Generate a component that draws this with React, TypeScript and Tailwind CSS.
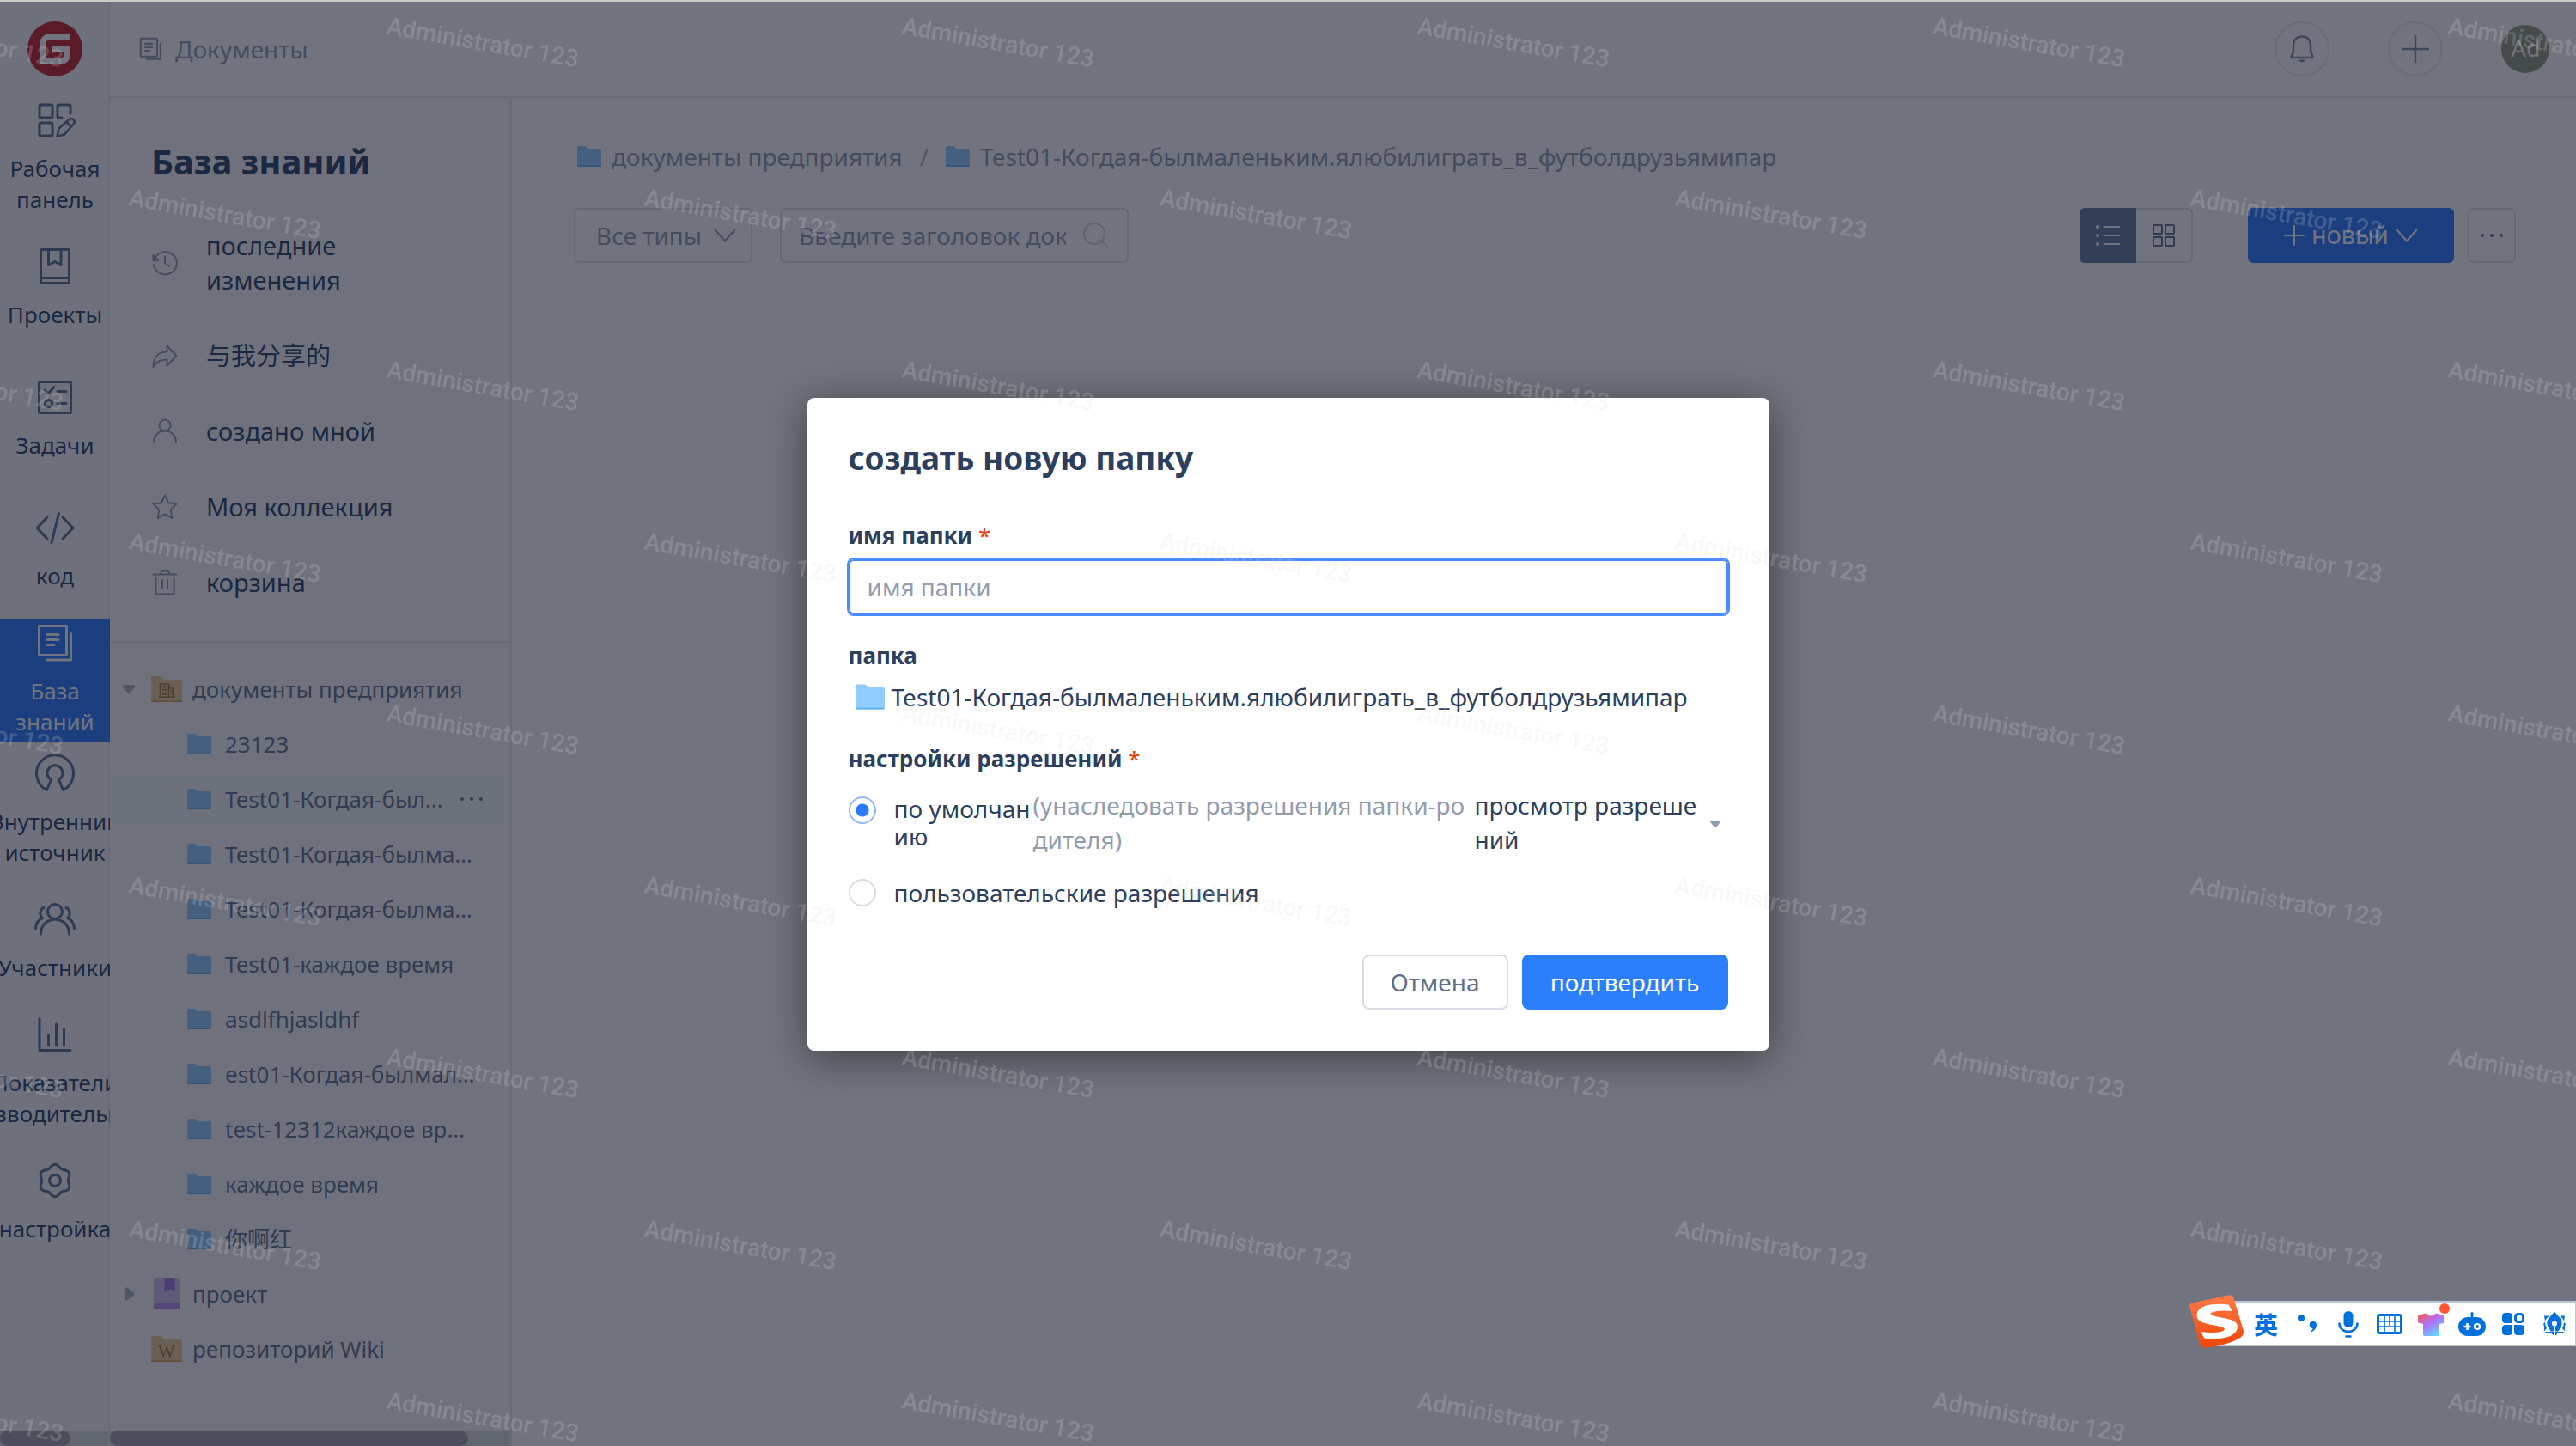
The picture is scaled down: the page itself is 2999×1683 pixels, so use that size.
import React from "react";

type IconProps = { className?: string };

/* ---------- rail icons ---------- */

const Stroke = ({ children, className = "size-12", box = 48, width = 3 }: { children: React.ReactNode; className?: string; box?: number; width?: number }) => (
  <svg viewBox={`0 0 ${box} ${box}`} className={className} fill="none" stroke="currentColor" strokeWidth={width} strokeLinecap="round" strokeLinejoin="round" aria-hidden="true">
    {children}
  </svg>
);

const DashboardIcon = () => (
  <Stroke>
    <rect x="6" y="6" width="15" height="15" rx="1.5" />
    <rect x="6" y="27" width="15" height="15" rx="1.5" />
    <path d="M42 16V7.500A1.500 1.500 0 0 0 40.500 6H28.500A1.500 1.500 0 0 0 27 7.500V19.500A1.500 1.500 0 0 0 28.500 21H32" />
    <path d="M26.500 42.500l2-9L40.500 23a3.700 3.700 0 0 1 5.200 5.200L35 40.500zM37.500 26l5.500 5.500" strokeWidth="2.500" />
  </Stroke>
);

const BookIcon = () => (
  <Stroke>
    <rect x="7.500" y="4.500" width="33" height="39" rx="1.500" />
    <path d="M7.500 37.500h33M16.500 4.500V22.500l7.500-4 7 4V4.500" />
  </Stroke>
);

const TaskIcon = () => (
  <Stroke>
    <rect x="5.500" y="6.500" width="37" height="36" rx="1" />
    <path d="M12 16l4 4 7-7.500M27 17.500h10M27 31.500h10" />
    <circle cx="16.500" cy="31.500" r="4" />
  </Stroke>
);

const CodeIcon = () => (
  <Stroke>
    <path d="M15 12L3 24.500 15 37M33 12l12 12.500L33 37M28.500 7.500l-8.500 34" />
  </Stroke>
);

const WikiIcon = () => (
  <Stroke>
    <rect x="5.500" y="4.500" width="32" height="34" rx="1.500" />
    <path d="M42.500 13.500V44H14.500" />
    <path d="M15 14.500h13M15 20.500h13M15 26.500h8" />
  </Stroke>
);

const SourceIcon = () => (
  <Stroke>
    <path d="M14.500 43.500L19.500 31.500A9 9 0 1 1 28.500 31.500L33.500 43.500A21.500 21.500 0 1 0 14.500 43.500Z" />
  </Stroke>
);

const MembersIcon = () => (
  <Stroke>
    <circle cx="24" cy="15" r="8.500" />
    <path d="M7.500 41C7.500 18.500 40.500 18.500 40.500 41" />
    <path d="M11 10.500C5.500 12.500 6 20.500 9.500 22.500C4.500 24.500 2 29 1.500 34.500" />
    <path d="M37 10.500C42.500 12.500 42 20.500 38.500 22.500C43.500 24.500 46 29 46.500 34.500" />
  </Stroke>
);

const StatsIcon = () => (
  <Stroke>
    <path d="M6 5.500V42.500H42M16.500 25v12M25.500 12v25M34.500 18v19" />
  </Stroke>
);

const gearPath =
  Array.from({ length: 120 }, (_, i) => {
    const a = (i / 120) * Math.PI * 2;
    const r = 17 + 1.7 * Math.cos(6 * a);
    return `${i ? "L" : "M"}${(24 + r * Math.sin(a)).toFixed(2)} ${(24 - r * Math.cos(a)).toFixed(2)}`;
  }).join("") + "Z";

const GearIcon = () => (
  <Stroke>
    <path d={gearPath} />
    <circle cx="24" cy="24" r="6.500" />
  </Stroke>
);

/* ---------- panel icons ---------- */

const HistoryIcon = () => (
  <Stroke box={32} width={2} className="size-8">
    <path d="M3.500 12.500A13.500 13 0 1 1 3 18M16 8.500V16.500l5 3.500" />
    <path d="M2.500 7v6h5.500z" fill="currentColor" />
  </Stroke>
);
const ShareIcon = () => (
  <Stroke box={32} width={2} className="size-8">
    <path d="M18.500 4.500v7C8 11.500 2.500 18 2.500 29c4-6 8-8.500 16-8.500v7L29.500 16z" />
  </Stroke>
);
const PersonIcon = () => (
  <Stroke box={32} width={2} className="size-8">
    <circle cx="16" cy="9" r="6.500" />
    <path d="M3 29c0-8 5.500-13.500 13-13.500S29 21 29 29" />
  </Stroke>
);
const StarIcon = () => (
  <Stroke box={32} width={2} className="size-8">
    <path d="M16 2.500l4.200 8.800 9.300 1.200-6.800 6.700 1.700 9.800L16 24.300 7.600 29l1.700-9.800-6.800-6.700 9.300-1.200z" />
  </Stroke>
);
const TrashIcon = () => (
  <Stroke box={32} width={2} className="size-8">
    <path d="M2.500 6.500h27M11 6c0-5 10-5 10 0M5.500 10.500V28a1.500 1.500 0 0 0 1.500 1.500h18a1.500 1.500 0 0 0 1.500-1.500V10.500M13 13v10M19 13v10" />
  </Stroke>
);

const Chevron = ({ className }: IconProps) => (
  <svg viewBox="0 0 26 16" className={className} fill="none" stroke="currentColor" strokeWidth="2" strokeLinecap="round" strokeLinejoin="round" aria-hidden="true">
    <path d="M1.500 1.500L13 14.500 24.500 1.500" />
  </svg>
);

const Folder = ({ className }: IconProps) => (
  <svg viewBox="0 0 28 24" className={className} aria-hidden="true">
    <path d="M0 1.500Q0 0 1.500 0H9.500L12 3H26.500Q28 3 28 4.500V22.500Q28 24 26.500 24H1.500Q0 24 0 22.500Z" fill="#8fccff" />
    <path d="M0 22.500Q0 24 1.500 24H26.500Q28 24 28 22.500Z" fill="#5faef5" />
  </svg>
);

const OrangeFolder = ({ children }: { children: React.ReactNode }) => (
  <svg viewBox="0 0 36 30" className="h-[30px] w-9" aria-hidden="true">
    <path d="M0 1.500Q0 0 1.500 0H12L15 4H34.500Q36 4 36 5.500V28.500Q36 30 34.500 30H1.500Q0 30 0 28.500Z" fill="#eccb9a" />
    <path d="M0 28.500Q0 30 1.500 30H34.500Q36 30 36 28.500Z" fill="#d59d52" />
    {children}
  </svg>
);

const CompanyIcon = () => (
  <OrangeFolder>
    <path d="M10.500 24V9H20.500V24M20.500 14H25.500V24M9 24.200H27.500M13 12.500h5M13 15.500h5M13 18.500h5M13 21h5M22.500 17h2M22.500 20.500h2" fill="none" stroke="#a3763a" strokeWidth="1.600" />
  </OrangeFolder>
);
const WikiFolderIcon = () => (
  <OrangeFolder>
    <text x="18" y="24.500" textAnchor="middle" fontSize="21" fontFamily="Liberation Serif" fill="#a8772f">W</text>
  </OrangeFolder>
);
const ProjectBookIcon = () => (
  <svg viewBox="0 0 30 36" className="h-9 w-[30px]" aria-hidden="true">
    <rect width="30" height="36" rx="2" fill="#d3bdf0" />
    <path d="M0 28H30V34Q30 36 28 36H2Q0 36 0 34Z" fill="#b88cf0" />
    <path d="M12.500 0H24.500V15.500L18.500 12.500 12.500 15.500Z" fill="#a675ea" />
  </svg>
);

/* ---------- data ---------- */

const railItems = [
  { lines: ["Рабочая", "панель"], Icon: DashboardIcon },
  { lines: ["Проекты"], Icon: BookIcon },
  { lines: ["Задачи"], Icon: TaskIcon },
  { lines: ["код"], Icon: CodeIcon },
  { lines: ["База", "знаний"], Icon: WikiIcon, active: true },
  { lines: ["Внутренний", "источник"], Icon: SourceIcon },
  { lines: ["Участники"], Icon: MembersIcon },
  { lines: ["Показатели", "производительность"], Icon: StatsIcon },
  { lines: ["настройка"], Icon: GearIcon },
];

const menuItems = [
  { label: "последние изменения", Icon: HistoryIcon },
  { label: "与我分享的", Icon: ShareIcon },
  { label: "создано мной", Icon: PersonIcon },
  { label: "Моя коллекция", Icon: StarIcon },
  { label: "корзина", Icon: TrashIcon },
];

const folders = [
  { label: "23123" },
  { label: "Test01-Когдая-былмаленьким.ялюбилиграть", active: true },
  { label: "Test01-Когдая-былмаленьким.ялюбилиграть" },
  { label: "Test01-Когдая-былмаленьким.ялюбилиграть" },
  { label: "Test01-каждое время" },
  { label: "asdlfhjasldhf" },
  { label: "est01-Когдая-былмаленьким.ялюбилиграть" },
  { label: "test-12312каждое время" },
  { label: "каждое время" },
  { label: "你啊红" },
];

const longName = "Test01-Когдая-былмаленьким.ялюбилиграть_в_футболдрузьямипар";

/* ---------- sections ---------- */

function Rail() {
  return (
    <nav className="flex w-32 shrink-0 flex-col overflow-hidden bg-[#f7f8fa] shadow-[inset_-2px_0_0_#e4e8ee]">
      <a href="#home" aria-label="Gitee" className="flex h-[110px] shrink-0 items-center justify-center">
        <svg viewBox="0 0 24 24" className="size-16" aria-hidden="true">
          <circle cx="12" cy="12" r="12" fill="#c81e2a" />
          <path fill="#fff" d="M18.074 5.333c.328 0 .593.266.592.593v1.482a.594.594 0 0 1-.593.592H9.777c-.982 0-1.778.796-1.778 1.778v5.630c0 .327.266.592.593.592h5.630c.982 0 1.778-.796 1.778-1.778v-.296a.593.593 0 0 0-.592-.593h-4.150a.592.592 0 0 1-.592-.592v-1.482a.593.593 0 0 1 .593-.592h6.815c.327 0 .593.265.593.592v3.408a4 4 0 0 1-4 4H5.926a.593.593 0 0 1-.593-.593V9.778a4.444 4.444 0 0 1 4.445-4.444h8.296z" />
        </svg>
      </a>
      <ul className="flex min-h-0 flex-1 flex-col gap-2 overflow-hidden">
        {railItems.map(({ lines, Icon, active }) => (
          <li key={lines[0]} className="shrink-0">
            <a
              href={`#${lines[0]}`}
              className={
                active
                  ? "flex h-36 flex-col items-center justify-center gap-3.5 bg-[#2979ff] pb-0.5 text-white"
                  : "flex h-36 flex-col items-center justify-center gap-3.5 pb-0.5 text-[#576e8c]"
              }
            >
              <Icon />
              <span className={active ? "flex flex-col items-center text-[26px] leading-9" : "flex flex-col items-center text-[26px] leading-9 text-[#2a4166]"}>
                {lines.map((l) => (
                  <span key={l} className="whitespace-nowrap">{l}</span>
                ))}
              </span>
            </a>
          </li>
        ))}
      </ul>
      <div className="mr-0.5 h-[18px] shrink-0 bg-[#d8d9dc]">
        <div className="h-full w-[82px] rounded-full bg-[#a2a2a7]" />
      </div>
    </nav>
  );
}

function Panel() {
  return (
    <aside className="flex w-[468px] shrink-0 flex-col border-r-2 border-[#e4e8ee] bg-[#fafbfc]">
      <h1 className="px-12 pt-[42px] pb-[22px] text-[40px] leading-[64px] font-bold text-[#2a4166]">База знаний</h1>
      <ul className="border-b-2 border-[#e4e8ee] pb-6">
        {menuItems.map(({ label, Icon }) => (
          <li key={label}>
            <a href={`#${label}`} className="flex items-center gap-8 py-6 pr-24 pl-12 text-[29px] leading-10 text-[#2a4166]">
              <span className="shrink-0 text-[#8f9bb0]"><Icon /></span>
              {label}
            </a>
          </li>
        ))}
      </ul>
      <ul className="mt-[22px] flex min-h-0 flex-1 flex-col overflow-hidden text-[26px] leading-10 text-[#5f7290]">
        <li className="flex h-16 shrink-0 items-center">
          <svg viewBox="0 0 16 11" className="ml-3.5 h-[11px] w-4 text-[#a9b2c0]" aria-hidden="true"><path d="M1.500 0h13L16 1.500 8.700 10.500H7.300L0 1.500Z" fill="currentColor" /></svg>
          <a href="#company" className="ml-[18px] flex items-center gap-3"><CompanyIcon />документы предприятия</a>
        </li>
        {folders.map(({ label, active }, i) => (
          <li key={i} className={active ? "flex h-16 shrink-0 items-center bg-[#f2f7f9] pr-8 pl-[90px]" : "flex h-16 shrink-0 items-center pr-10 pl-[90px]"}>
            <a href={`#folder-${i}`} className="flex min-w-0 flex-1 items-center gap-4">
              <Folder className="h-6 w-7 shrink-0" />
              <span className="truncate">{label}</span>
            </a>
            {active && (
              <button type="button" aria-label="Ещё" className="ml-2.5 shrink-0">
                <svg viewBox="0 0 26 4" className="h-1 w-[26px]" fill="currentColor" aria-hidden="true"><circle cx="2" cy="2" r="2" /><circle cx="13" cy="2" r="2" /><circle cx="24" cy="2" r="2" /></svg>
              </button>
            )}
          </li>
        ))}
        <li className="flex h-16 shrink-0 items-center">
          <svg viewBox="0 0 11 16" className="ml-[18px] h-4 w-[11px] text-[#a9b2c0]" aria-hidden="true"><path d="M0 1.500V14.500L1.500 16 10.500 8.700V7.300L1.500 0Z" fill="currentColor" /></svg>
          <a href="#project" className="ml-[22px] flex items-center gap-[15px]"><ProjectBookIcon />проект</a>
        </li>
        <li className="flex h-16 shrink-0 items-center pl-12">
          <a href="#wiki" className="flex items-center gap-3"><WikiFolderIcon />репозиторий Wiki</a>
        </li>
      </ul>
      <div className="h-[18px] shrink-0 bg-[#d8d9dc]">
        <div className="h-full w-[417px] rounded-full bg-[#a2a2a7]" />
      </div>
    </aside>
  );
}

function Header() {
  return (
    <header className="flex h-28 shrink-0 items-center border-b-2 border-[#e4e8ee] bg-white pr-[31px] pl-[34px]">
      <h2 className="flex items-center gap-3.5 text-[28px] leading-10 text-[#8f9bb0]">
        <Stroke box={48} width={3.5} className="size-[28px]">
          <rect x="3" y="3" width="33" height="36" rx="1.500" />
          <path d="M42.500 13.500V44H14.500" />
          <path d="M12 13.500h14M12 20.500h14M12 27.500h9" />
        </Stroke>
        Документы
      </h2>
      <div className="ml-auto flex items-center gap-[68px] text-[#7f8ea6]">
        <button type="button" aria-label="Уведомления" className="flex size-16 items-center justify-center rounded-full border-2 border-[#e9ecf2]">
          <svg viewBox="0 0 28 32" className="h-8 w-7" fill="none" stroke="currentColor" strokeWidth="2.500" strokeLinejoin="round" aria-hidden="true">
            <path d="M4 19V12C4 5 8 1.500 14 1.500S24 5 24 12v7l2.500 6v1h-25v-1z" />
            <path d="M10.500 28.500h7q-1 3-3.500 3t-3.500-3z" fill="currentColor" stroke="none" />
          </svg>
        </button>
        <button type="button" aria-label="Создать" className="flex size-16 items-center justify-center rounded-full border-2 border-[#e9ecf2]">
          <Stroke box={32} width={2.5} className="size-8"><path d="M16 1v30M1 16h30" /></Stroke>
        </button>
        <button type="button" className="flex size-14 items-center justify-center rounded-full bg-[#8e9a7d] [font-family:Roboto,sans-serif] text-[28px] leading-10 text-white">Ad</button>
      </div>
    </header>
  );
}

function Content() {
  return (
    <main className="flex min-w-0 flex-1 flex-col bg-white pt-12 pr-[70px] pl-[72px]">
      <ol className="flex items-center pl-1 text-[28px] leading-10 text-[#8f9bb0]">
        <li><a href="#company" className="flex items-center gap-3"><Folder className="h-6 w-7" />документы предприятия</a></li>
        <li className="mx-5 text-[#a9b2c0]">/</li>
        <li><a href="#folder" className="flex items-center gap-3"><Folder className="h-6 w-7" />{longName}</a></li>
      </ol>
      <div className="mt-10 flex items-center text-[28px] leading-10 text-[#8f9bb0]">
        <button type="button" className="flex h-16 items-center gap-3.5 rounded-md border-2 border-[#dfe2e8] pr-[17px] pl-6">
          Все типы
          <Chevron className="h-4 w-[26px]" />
        </button>
        <label className="ml-8 flex h-16 w-[406px] items-center rounded-md border-2 border-[#dfe2e8] pr-[21px] pl-5">
          <input type="text" aria-label="Поиск" placeholder="Введите заголовок документа" className="min-w-0 flex-1 bg-transparent outline-none placeholder:text-[#8f9bb0]" />
          <svg viewBox="0 0 30 30" className="ml-5 size-[30px] text-[#d0d5de]" fill="none" stroke="currentColor" strokeWidth="2" strokeLinecap="round" aria-hidden="true">
            <circle cx="13" cy="13" r="12" /><path d="M21.500 21.500L29 29" />
          </svg>
        </label>
        <div className="ml-auto flex">
          <button type="button" aria-label="Список" className="flex h-16 w-[66px] items-center justify-center rounded-l-md bg-[#647a9d] text-white">
            <svg viewBox="0 0 28 24" className="h-6 w-7" fill="none" stroke="currentColor" strokeWidth="2" strokeLinecap="round" aria-hidden="true">
              <path d="M9.500 2h18M9.500 12h18M9.500 22h18" /><path d="M2 2h.1M2 12h.1M2 22h.1" strokeWidth="4" />
            </svg>
          </button>
          <button type="button" aria-label="Сетка" className="flex h-16 w-[66px] items-center justify-center rounded-r-md border-2 border-l-0 border-[#dfe2e8] text-[#5f7290]">
            <svg viewBox="0 0 26 26" className="size-[26px]" fill="none" stroke="currentColor" strokeWidth="2" aria-hidden="true">
              <rect x="1" y="1" width="10" height="10" rx="1" /><rect x="15" y="1" width="10" height="10" rx="1" /><rect x="1" y="15" width="10" height="10" rx="1" /><rect x="15" y="15" width="10" height="10" rx="1" />
            </svg>
          </button>
        </div>
        <button type="button" className="ml-16 flex h-16 w-60 items-center justify-center gap-2 rounded-md bg-[#2979ff] [font-family:Inter,sans-serif] text-[29px] text-white">
          <Stroke box={24} width={2} className="size-6"><path d="M12 1v22M1 12h22" /></Stroke>
          новый
          <Chevron className="h-4 w-[26px]" />
        </button>
        <button type="button" aria-label="Ещё" className="ml-4 flex h-16 w-14 items-center justify-center rounded-md border-2 border-[#dfe2e8] text-[#5f7290]">
          <svg viewBox="0 0 26 4" className="h-1 w-[26px]" fill="currentColor" aria-hidden="true"><circle cx="2" cy="2" r="2" /><circle cx="13" cy="2" r="2" /><circle cx="24" cy="2" r="2" /></svg>
        </button>
      </div>
    </main>
  );
}

function CreateFolderDialog() {
  return (
    <form role="dialog" aria-labelledby="dialog-title" className="w-[1120px] rounded-lg bg-white px-12 pt-[46px] pb-12 text-[28px] leading-10 text-[#2c405e] shadow-[0_8px_48px_rgba(0,0,0,0.45)]">
      <h2 id="dialog-title" className="text-[37px] leading-[48px] font-bold">создать новую папку</h2>
      <label htmlFor="folder-name" className="mt-[46px] block text-[26px] font-bold">
        имя папки <span className="font-normal text-[#e8380d]">*</span>
      </label>
      <input id="folder-name" type="text" placeholder="имя папки" className="mt-2 block h-16 w-full rounded-md border-2 border-[#4c8bff] px-5 ring-2 ring-[#4c8bff] outline-none placeholder:text-[#929cae]" />
      <p className="mt-7 text-[26px] font-bold">папка</p>
      <p className="mt-2 flex items-center gap-2 pl-2">
        <Folder className="h-[30px] w-[34px]" />
        {longName}
      </p>
      <fieldset className="mt-8">
        <legend className="text-[26px] font-bold">
          настройки разрешений <span className="font-normal text-[#e8380d]">*</span>
        </legend>
        <div className="mt-3.5 flex">
          <label className="flex w-[215px] shrink-0">
            <input type="radio" name="access" defaultChecked className="mt-2.5 mr-[21px] size-8 shrink-0 appearance-none rounded-full border-2 border-[#d8dce2] checked:border-[#94b8f2] checked:bg-[radial-gradient(circle,#2979ff_7px,#ffffff_8px)]" />
            <span className="mt-2 leading-8 whitespace-nowrap">по умолчан<br />ию</span>
          </label>
          <span className="w-[514px] shrink-0 whitespace-nowrap text-[#929cae]">(унаследовать разрешения папки-ро<br />дителя)</span>
          <button type="button" className="flex flex-1 items-center justify-between pr-[9px] text-left">
            <span className="whitespace-nowrap">просмотр разреше<br />ний</span>
            <svg viewBox="0 0 12 8" className="mt-1 h-2 w-3" aria-hidden="true"><path d="M0 0h12v1.500L7 8H5L0 1.500z" fill="#929cae" /></svg>
          </button>
        </div>
        <label className="mt-[22px] flex items-center">
          <input type="radio" name="access" className="mr-[21px] size-8 shrink-0 appearance-none rounded-full border-2 border-[#d8dce2] checked:border-[#94b8f2] checked:bg-[radial-gradient(circle,#2979ff_7px,#ffffff_8px)]" />
          пользовательские разрешения
        </label>
      </fieldset>
      <div className="mt-[52px] flex justify-end gap-4">
        <button type="button" className="h-16 w-[170px] rounded-lg border-2 border-[#d8dce2] text-[#5f6f88]">Отмена</button>
        <button type="submit" className="h-16 w-60 rounded-lg bg-[#2b7ffa] text-white">подтвердить</button>
      </div>
    </form>
  );
}

function Watermark() {
  return (
    <svg className="pointer-events-none absolute inset-0 size-full" aria-hidden="true">
      <defs>
        <pattern id="mark" x="100" y="0" width="600" height="400" patternUnits="userSpaceOnUse">
          <g fontFamily="Roboto" fontSize="28" fontWeight="500" fill="#dadada" fillOpacity="0.2">
            <text transform="translate(349 37) rotate(10)">Administrator 123</text>
            <text transform="translate(49 237) rotate(10)">Administrator 123</text>
          </g>
        </pattern>
      </defs>
      <rect width="100%" height="100%" fill="url(#mark)" />
    </svg>
  );
}

function InputMethodBar() {
  return (
    <div className="absolute right-0 bottom-[116px] flex h-[53px] items-center border-y-2 border-r border-[#b9c6de] bg-white pl-[46px] text-[#0070dc]">
      <svg viewBox="0 0 66 64" className="absolute -top-2.5 -left-5 h-16 w-[66px]" aria-hidden="true">
        <defs>
          <linearGradient id="ime" x1="0" y1="0" x2="0" y2="1"><stop offset="0" stopColor="#ff7a48" /><stop offset="1" stopColor="#ee4608" /></linearGradient>
        </defs>
        <path d="M4 10.500L46 1.500Q51 .5 52.500 5L64 43Q64.500 48 60 51Q46 60 20 62.500Q14.500 63 13 58L1.500 16Q.5 11.500 4 10.500Z" fill="url(#ime)" />
        <path d="M46.500 12.500L51 20C42 19 32 19 26 22C24 25 30 26 38 27.500C50 29.500 57 32 57 38C57 47 46 51.500 34 52C27 52.300 21 52 18 51.500L14.500 44C24 45.500 36 45.500 41 42.500C44 39.500 38 38 30 36.500C18 34.500 9.500 32 9.500 25C9.500 16 20 12.500 30 12Q39 11.500 46.500 12.500Z" fill="#fff" />
      </svg>
      <button type="button" className="w-12 text-center [font-family:'Noto_Sans_CJK_SC',sans-serif] text-[28px] leading-10 font-bold">英</button>
      <button type="button" aria-label="Пунктуация" className="flex w-12 justify-center">
        <svg viewBox="0 0 24 24" className="size-6" fill="currentColor" aria-hidden="true"><circle cx="5" cy="5" r="4" /><path d="M19 9a4 4 0 0 1 4 4c0 4-3 7-6 8.500l-1-1c2-1.500 2.500-2.500 2.500-3.500A4 4 0 0 1 19 9z" /></svg>
      </button>
      <button type="button" aria-label="Голос" className="flex w-12 justify-center">
        <svg viewBox="0 0 24 32" className="h-8 w-6" fill="none" stroke="currentColor" strokeWidth="2.500" strokeLinecap="round" aria-hidden="true"><rect x="6.500" y="1" width="11" height="19" rx="5.500" fill="currentColor" stroke="none" /><path d="M1.500 15.500a10.500 9.500 0 0 0 21 0M9.500 30.500h5" /></svg>
      </button>
      <button type="button" aria-label="Клавиатура" className="flex w-12 justify-center">
        <svg viewBox="0 0 30 24" className="h-6 w-[30px]" aria-hidden="true"><rect width="30" height="24" rx="4" fill="currentColor" /><rect x="3" y="3" width="24" height="18" fill="#fff" /><path d="M3 9h24M3 15h24M9 3v12M15 3v12M21 3v12M9 15v6M21 15v6" stroke="currentColor" strokeWidth="1.600" /></svg>
      </button>
      <button type="button" aria-label="Темы" className="relative flex w-12 justify-center">
        <svg viewBox="0 0 32 28" className="h-7 w-8" aria-hidden="true">
          <defs><linearGradient id="shirt" x1="0" y1="0" x2=".7" y2="1"><stop offset="0" stopColor="#ff5c3a" /><stop offset=".5" stopColor="#b070ff" /><stop offset="1" stopColor="#5fd8ff" /></linearGradient></defs>
          <path d="M1 4L10 1.500Q16 7.500 22 1.500L31 4V13L26 14V26Q26 28 24 28H9Q7 28 7 26V14L1 12.500Z" fill="url(#shirt)" />
        </svg>
        <span className="absolute -top-2.5 right-0.5 size-3 rounded-full bg-[#ff5530]" />
      </button>
      <button type="button" aria-label="Помощник" className="flex w-12 justify-center">
        <svg viewBox="0 0 32 28" className="h-7 w-8" aria-hidden="true"><path d="M14.500 1.500a1.500 1.500 0 0 1 3 0V6H21a11 11 0 0 1 0 22H11a11 11 0 0 1 0-22h3.500z" fill="currentColor" /><path d="M10.500 13v8M6.500 17h8" stroke="#fff" strokeWidth="2.500" /><circle cx="22" cy="17" r="3" fill="none" stroke="#fff" strokeWidth="2.200" /></svg>
      </button>
      <button type="button" aria-label="Инструменты" className="flex w-12 justify-center">
        <svg viewBox="0 0 26 26" className="size-[26px]" fill="currentColor" aria-hidden="true"><path d="M4 0h4q4 0 4 4v8H4q-4 0-4-4V4q0-4 4-4zM0 18q0-4 4-4h8v8q0 4-4 4H4q-4 0-4-4zM14 14h8q4 0 4 4v4q0 4-4 4h-4q-4 0-4-4z" /><rect x="15.500" y="1.500" width="9" height="9" rx="3" fill="none" stroke="currentColor" strokeWidth="3" /></svg>
      </button>
      <button type="button" aria-label="Перо" className="flex w-12 justify-center">
        <svg viewBox="0 0 28 30" className="h-[30px] w-7" aria-hidden="true">
          <path d="M14 1L18.500 6H14.500V12.300A3 3 0 0 1 15 18V24H24L25.500 25H18.500L14 29.500 9.500 25H2.500L4 24H13V18A3 3 0 0 1 13.500 12.300V6H9.500Z" fill="currentColor" />
          <path d="M14 1L18.500 6Q24.500 11 22 17L18.500 23.500H9.500L6 17Q3.500 11 9.500 6Z" fill="currentColor" />
          <path d="M2 5.500H8Q3.500 9 3 12ZM26 5.500H20Q24.500 9 25 12ZM1 15L3 12.500Q3 17 5 20L1.500 24Q3 19 1 15ZM27 15L25 12.500Q25 17 23 20L26.500 24Q25 19 27 15Z" fill="currentColor" />
          <path d="M14 15v14" stroke="#fff" strokeWidth="2" />
          <circle cx="14" cy="14.500" r="3" fill="#fff" />
        </svg>
      </button>
    </div>
  );
}

export default function App() {
  return (
    <div className="flex h-screen flex-col overflow-hidden bg-white [font-family:'Noto_Sans','Noto_Sans_CJK_SC',sans-serif]">
      <div className="h-0.5 shrink-0 bg-[#c9cdca]" />
      <div className="relative flex min-h-0 flex-1">
        <Rail />
        <div className="flex min-w-0 flex-1 flex-col">
          <Header />
          <div className="flex min-h-0 flex-1">
            <Panel />
            <Content />
          </div>
        </div>
        <div className="absolute inset-0 flex items-center justify-center bg-[#131728]/60">
          <CreateFolderDialog />
        </div>
        <Watermark />
        <InputMethodBar />
      </div>
    </div>
  );
}
